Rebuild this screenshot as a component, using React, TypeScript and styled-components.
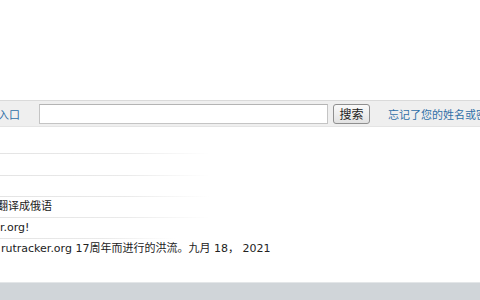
import styled, { createGlobalStyle } from "styled-components";

const GlobalStyle = createGlobalStyle`
  html, body {
    margin: 0;
    padding: 0;
    background: #fff;
    overflow: hidden;
  }
  body {
    font-family: "DejaVu Sans", Verdana, "Noto Sans CJK SC", sans-serif;
    font-size: 11px;
    color: #222;
  }
`;

const Page = styled.div`
  width: 480px;
  height: 300px;
  display: flex;
  flex-direction: column;
  overflow: hidden;
`;

const TopSpace = styled.div`
  height: 100px;
  flex: none;
`;

const SearchBar = styled.form`
  flex: none;
  height: 25px;
  display: flex;
  align-items: center;
  background: #efefef;
  border-top: 1px solid #dadada;
  border-bottom: 1px solid #e4e4e4;
  white-space: nowrap;
  overflow: hidden;
`;

const BarLink = styled.a<{ $indent?: number }>`
  color: #2f6fa7;
  text-decoration: none;
  font-size: 11px;
  margin-left: ${({ $indent }) => $indent ?? 0}px;
  flex: none;
`;

const SearchInput = styled.input`
  box-sizing: border-box;
  width: 289px;
  height: 20px;
  margin: 0 5px 0 19px;
  border: 1px solid #c4c4c4;
  border-top-color: #b4b4b4;
  background: #fff;
  padding: 0 3px;
  flex: none;
`;

const SearchButton = styled.button`
  box-sizing: border-box;
  height: 20px;
  width: 37px;
  padding: 0;
  margin-right: 18px;
  border: 1px solid #8f8f8f;
  border-radius: 3px;
  background: linear-gradient(#fafafa, #e2e2e2);
  font-family: "DejaVu Sans", "Noto Sans CJK SC", sans-serif;
  font-size: 12px;
  color: #222;
  flex: none;
`;

const NewsList = styled.ul`
  list-style: none;
  margin: 6px 0 0;
  padding: 0;
  flex: 1;
`;

const NewsItem = styled.li<{ $indent?: number; $lineWidth?: number; $noLine?: boolean }>`
  position: relative;
  height: 21.3px;
  line-height: 20px;
  white-space: nowrap;
  text-indent: ${({ $indent }) => $indent ?? 0}px;
  color: #222;
  &::after {
    content: "";
    display: ${({ $noLine }) => ($noLine ? "none" : "block")};
    position: absolute;
    left: 0;
    bottom: 0;
    height: 1px;
    width: ${({ $lineWidth }) => $lineWidth ?? 210}px;
    background: linear-gradient(to right, #e4e4e4 0%, #eaeaea 60%, rgba(240, 240, 240, 0) 100%);
  }
`;

const Footer = styled.footer`
  flex: none;
  height: 17px;
  background: #d0d5d9;
  border-top: 1px solid #e3e6e8;
`;

export default function App() {
  return (
    <Page>
      <GlobalStyle />
      <TopSpace />
      <SearchBar onSubmit={(e) => e.preventDefault()}>
        <BarLink href="#" $indent={-2}>入口</BarLink>
        <SearchInput type="text" />
        <SearchButton type="submit">搜索</SearchButton>
        <BarLink href="#">忘记了您的姓名或密码？</BarLink>
      </SearchBar>
      <NewsList>
        <NewsItem />
        <NewsItem />
        <NewsItem />
        <NewsItem $indent={-3}>翻译成俄语</NewsItem>
        <NewsItem $lineWidth={175}>r.org!</NewsItem>
        <NewsItem $indent={1} $noLine>
          rutracker.org 17周年而进行的洪流。九月 18， 2021
        </NewsItem>
      </NewsList>
      <Footer />
    </Page>
  );
}
